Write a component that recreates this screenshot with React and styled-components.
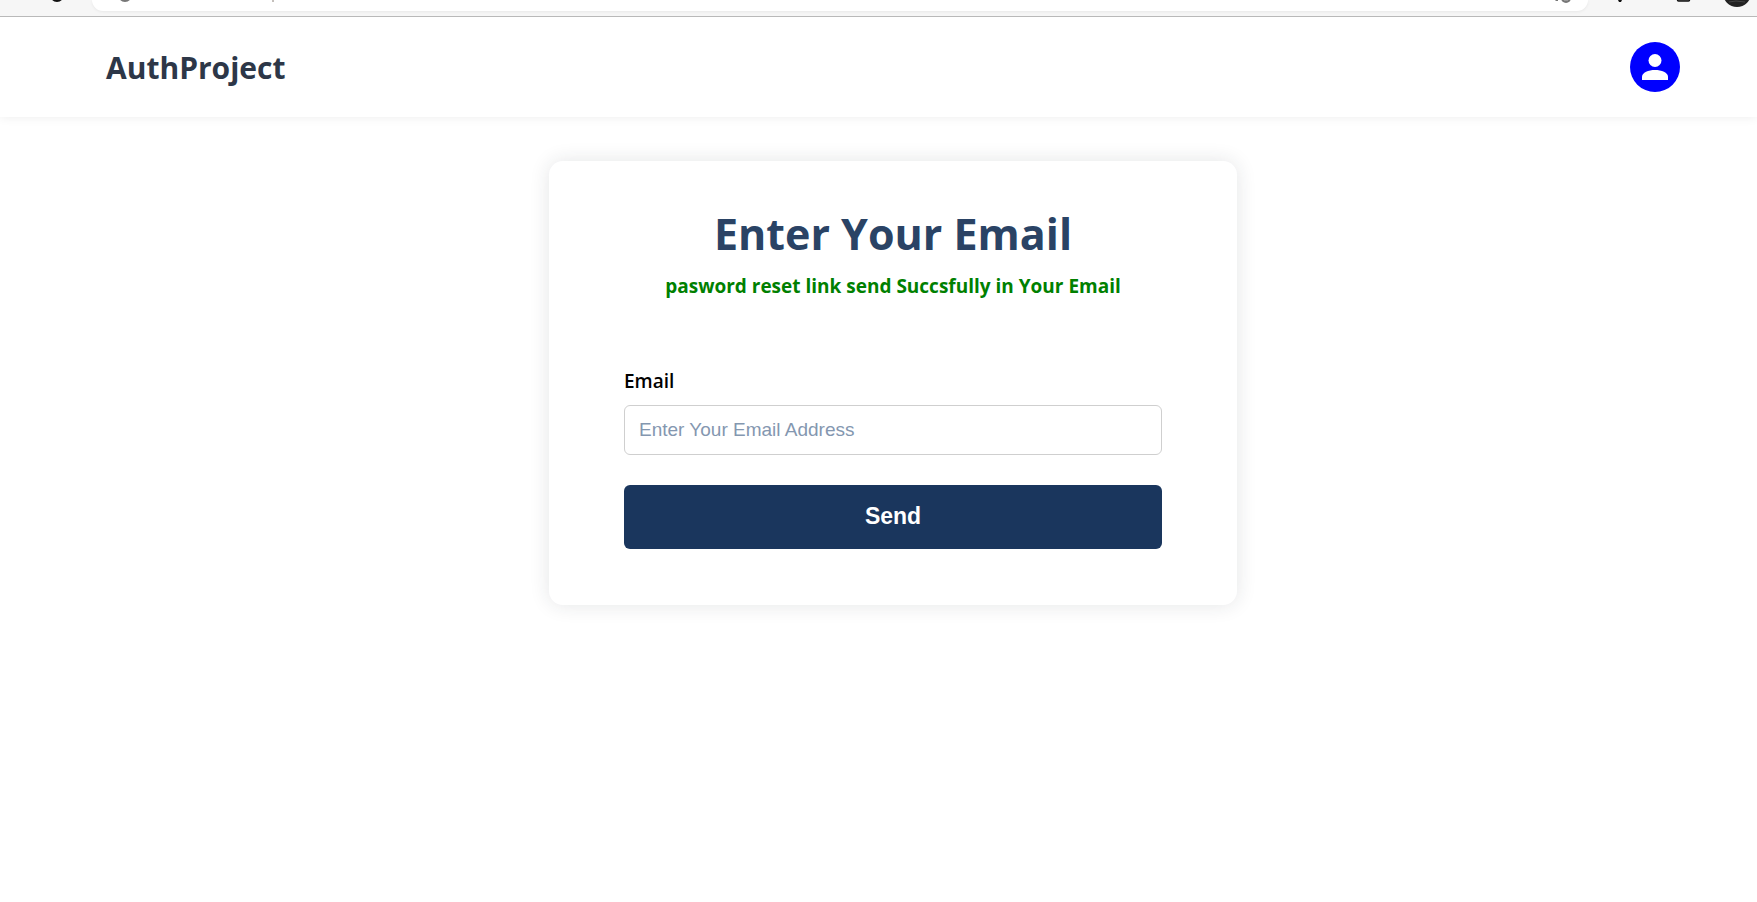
import React from "react";
import styled, { createGlobalStyle } from "styled-components";

const GlobalStyle = createGlobalStyle`
  *, *::before, *::after { box-sizing: border-box; }
  body {
    margin: 0;
    background: #fff;
    color: #000;
    font-family: "Open Sans", "Noto Sans", sans-serif;
  }
  h1, p { margin: 0; }
`;

const BrowserBar = styled.div`
  display: flex;
  align-items: flex-start;
  height: 17px;
  overflow: hidden;
  background: #f6f6f6;
  border-bottom: 1px solid #b9b9b9;
`;

const BarStart = styled.div`
  display: flex;
  flex: 0 0 92px;
  padding-left: 50px;
`;

const AddressBar = styled.div`
  display: flex;
  flex: 1;
  align-items: flex-start;
  gap: 140px;
  height: 11px;
  padding: 0 14px 0 26px;
  background: #fff;
  border-radius: 0 0 18px 18px;
  box-shadow: 0 1px 3px rgba(0, 0, 0, 0.06);
`;

const AddressEnd = styled.div`
  display: flex;
  margin-left: auto;
`;

const BarEnd = styled.div`
  display: flex;
  flex: 0 0 169px;
  align-items: flex-start;
  gap: 32px;
  padding-left: 28px;
`;

const BarGlyph = styled.svg`
  display: block;
  flex: none;
`;

const Header = styled.header`
  display: flex;
  align-items: center;
  justify-content: space-between;
  height: 100px;
  padding: 0 77px 0 106px;
  background: #fff;
  box-shadow: 0 0 10px rgba(0, 0, 0, 0.08);
  clip-path: inset(0 0 -20px);
`;

const Logo = styled.a`
  padding-top: 2px;
  color: #2d3748;
  font-size: 30px;
  font-weight: 700;
  line-height: 40px;
  text-decoration: none;
`;

const ProfileButton = styled.button`
  display: grid;
  place-items: center;
  width: 50px;
  height: 50px;
  padding: 0;
  border: 0;
  border-radius: 50%;
  background: #0000ff;
  color: #fff;
  cursor: pointer;
`;

const Main = styled.main`
  display: flex;
  justify-content: center;
  padding: 44px 0 44px 29px;
`;

const Card = styled.form`
  display: flex;
  flex-direction: column;
  width: 100%;
  max-width: 688px;
  padding: 43px 75px 56px;
  background: #fff;
  border-radius: 14px;
  box-shadow: 0 0 20px rgba(30, 40, 50, 0.12);
`;

const Title = styled.h1`
  color: #2a4365;
  font-size: 43px;
  font-weight: 700;
  line-height: 60px;
  text-align: center;
`;

const Message = styled.p`
  margin-top: 8px;
  color: #008000;
  font-size: 19px;
  font-weight: 700;
  line-height: 28px;
  text-align: center;
`;

const Field = styled.div`
  display: flex;
  flex-direction: column;
  gap: 10px;
  margin: 67px 0 30px;
`;

const Label = styled.label`
  font-size: 19px;
  font-weight: 600;
  line-height: 28px;
`;

const Input = styled.input`
  width: 100%;
  height: 50px;
  padding: 0 14px;
  border: 1px solid #cfcfcf;
  border-radius: 6px;
  outline: none;
  background: #fff;
  font-family: "Liberation Sans", Arial, sans-serif;
  font-size: 19px;

  &::placeholder { color: #8497b0; opacity: 1; }
`;

const SubmitButton = styled.button`
  height: 64px;
  padding: 0 0 2px;
  border: 0;
  border-radius: 6px;
  background: #1a365d;
  color: #fff;
  font-family: "Liberation Sans", Arial, sans-serif;
  font-size: 23px;
  font-weight: 700;
  cursor: pointer;
`;

export default function App() {
  return (
    <>
      <GlobalStyle />
      <BrowserBar aria-hidden="true">
        <BarStart>
          <BarGlyph width="14" height="3" viewBox="0 0 14 3">
            <circle cx="7" cy="-5" r="6" fill="none" stroke="#111" strokeWidth="2" />
          </BarGlyph>
        </BarStart>
        <AddressBar>
          <BarGlyph width="14" height="3" viewBox="0 0 14 3">
            <circle cx="7" cy="-5" r="6" fill="none" stroke="#777" strokeWidth="2" />
          </BarGlyph>
          <BarGlyph width="2" height="2" viewBox="0 0 2 2">
            <path d="M1 0v2" stroke="#8a8079" />
          </BarGlyph>
          <AddressEnd>
            <BarGlyph width="22" height="4" viewBox="0 0 22 4">
              <path d="M3 0h3v1H4z" fill="#777" />
              <circle cx="14" cy="-2" r="5" fill="#777" />
              <path d="M12 0h4" stroke="#bbb" />
            </BarGlyph>
          </AddressEnd>
        </AddressBar>
        <BarEnd>
          <BarGlyph width="28" height="3" viewBox="0 0 28 3">
            <path d="M2 0h4L5 2H3z" fill="#111" />
          </BarGlyph>
          <BarGlyph width="15" height="3" viewBox="0 0 15 3">
            <path d="M1.5-3V0q0 1 1 1h10q1 0 1-1v-3" fill="#999" stroke="#111" strokeWidth="1.5" />
          </BarGlyph>
          <BarGlyph width="28" height="8" viewBox="0 0 28 8">
            <circle cx="14" cy="-7" r="14" fill="#222" />
            <path d="M6 2l7-1 9 1" fill="none" stroke="#444" />
          </BarGlyph>
        </BarEnd>
      </BrowserBar>
      <Header>
        <Logo href="#">AuthProject</Logo>
        <ProfileButton type="button" aria-label="Profile">
          <svg width="26" height="26" viewBox="0 0 26 26" fill="currentColor" aria-hidden="true">
            <circle cx="13" cy="6.5" r="6.5" />
            <path d="M0 26v-3.2C0 18.5 6.5 16 13 16s13 2.5 13 6.8V26z" />
          </svg>
        </ProfileButton>
      </Header>
      <Main>
        <Card onSubmit={(event) => event.preventDefault()}>
          <Title>Enter Your Email</Title>
          <Message role="status">pasword reset link send Succsfully in Your Email</Message>
          <Field>
            <Label htmlFor="email">Email</Label>
            <Input id="email" type="email" placeholder="Enter Your Email Address" />
          </Field>
          <SubmitButton type="submit">Send</SubmitButton>
        </Card>
      </Main>
    </>
  );
}
